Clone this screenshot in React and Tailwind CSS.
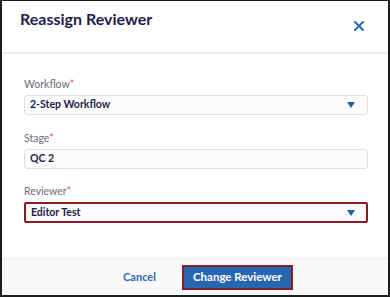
export default function App() {
  return (
    <div
      className="w-[390px] h-[297px] flex flex-col bg-white border-t border-x-2 border-b-2 border-[#1c1c1c] overflow-hidden"
      style={{ fontFamily: 'Lato, "Open Sans", "Liberation Sans", sans-serif' }}
    >
      <div className="h-[51px] flex items-start justify-between pl-[18px] pr-[24px]">
        <h2 className="pt-[7px] text-[16px] leading-[22px] font-bold text-[#1f1d4e]">
          Reassign Reviewer
        </h2>
        <button className="mt-[20px] text-[#2a6cb5]" aria-label="Close">
          <svg width="10" height="10" viewBox="0 0 10 10">
            <path
              d="M1 1 L9 9 M9 1 L1 9"
              stroke="currentColor"
              strokeWidth="2"
              strokeLinecap="square"
            />
          </svg>
        </button>
      </div>
      <div className="h-[2px] bg-[#eaecf2]" />

      <div className="flex-1 px-[20px] pt-[23px]">
        <Field label="Workflow">
          <Select value="2-Step Workflow" />
        </Field>
        <Field label="Stage" className="mt-[16px]">
          <div className="h-[20px] flex items-center px-[5px] rounded-[3px] border border-[#dcdde3] bg-[#fbfbfb] text-[10.5px] font-bold text-[#1f1d4e]">
            QC 2
          </div>
        </Field>
        <Field label="Reviewer" className="mt-[15px]">
          <Select value="Editor Test" danger />
        </Field>
      </div>

      <div className="h-[37px] border-t border-[#eeeeee] bg-[#f9f9f9] flex items-center justify-center gap-[26px] pl-[26px]">
        <button className="text-[11px] font-bold text-[#2c6bb0]">
          Cancel
        </button>
        <button className="h-[25px] px-[9px] border-2 border-[#8b1c24] bg-[#2866b1] text-white text-[11.5px] font-bold">
          Change Reviewer
        </button>
      </div>
    </div>
  );
}

function Field({ label, className = "", children }) {
  return (
    <div className={className}>
      <div className="text-[10.5px] leading-[14px] text-[#6c6c7e] mb-[4px] pl-[2px]">
        {label}
        <span className="text-[#e5535f]">*</span>
      </div>
      <div className="pl-[2px]">{children}</div>
    </div>
  );
}

function Select({ value, danger }) {
  return (
    <div
      className={
        danger
          ? "h-[21px] flex items-center justify-between pl-[5px] pr-[11px] rounded-[2px] border-2 border-[#8b1c24] bg-[#fbfbfb]"
          : "h-[20px] flex items-center justify-between pl-[5px] pr-[12px] rounded-[3px] border border-[#dcdde3] bg-[#fbfbfb]"
      }
    >
      <span className="text-[10.5px] font-bold text-[#1f1d4e]">{value}</span>
      <svg width="8" height="6" viewBox="0 0 8 6">
        <path d="M0 0 H8 L4 6 Z" fill="#1f5fa8" />
      </svg>
    </div>
  );
}
